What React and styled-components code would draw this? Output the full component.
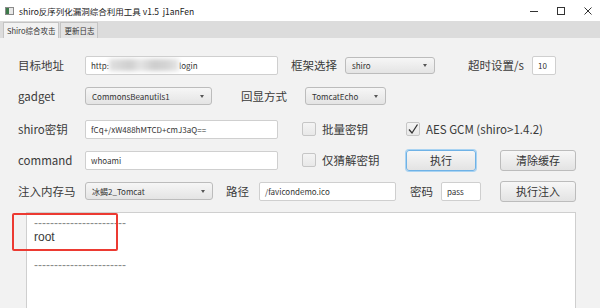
import styled, { createGlobalStyle } from "styled-components";

const Global = createGlobalStyle`
    html, body {
        margin: 0;
        padding: 0;
        background: #f2f2f2;
    }
    body {
        font-family: "Noto Sans CJK SC", "Noto Sans", sans-serif;
        color: #333;
    }
`

export default function App() {
    return (
        <Window>
            <Global />
            <TitleBar>
                <AppIcon />
                <Title>shiro反序列化漏洞综合利用工具 v1.5&nbsp;&nbsp;j1anFen</Title>
                <Controls>
                    <svg width="10" height="10" viewBox="0 0 10 10"><path d="M1 5.5h8" stroke="#333" strokeWidth="1" /></svg>
                    <svg width="10" height="10" viewBox="0 0 10 10"><rect x="1.5" y="1.5" width="7" height="7" fill="none" stroke="#333" strokeWidth="1" /></svg>
                    <svg width="10" height="10" viewBox="0 0 10 10"><path d="M1.5 1.5l7 7M8.5 1.5l-7 7" stroke="#333" strokeWidth="1" /></svg>
                </Controls>
            </TitleBar>
            <TabBar>
                <Tab $active>Shiro综合攻击</Tab>
                <Tab>更新日志</Tab>
            </TabBar>
            <Content>
                <Row>
                    <Label $w={67}>目标地址</Label>
                    <Input $w={193}>http:<Blur />login</Input>
                    <Label $ml={13} $w={54}>框架选择</Label>
                    <Select $w={90} $h={17}>shiro</Select>
                    <Label $ml={33} $w={64}>超时设置/s</Label>
                    <Input $w={24}>10</Input>
                </Row>
                <Row $mt={11}>
                    <Label $w={67}>gadget</Label>
                    <Select $w={127}>CommonsBeanutils1</Select>
                    <Label $ml={29} $w={64}>回显方式</Label>
                    <Select $w={81}>TomcatEcho</Select>
                </Row>
                <Row $mt={13}>
                    <Label $w={67}>shiro密钥</Label>
                    <Input $w={193}>fCq+/xW488hMTCD+cmJ3aQ==</Input>
                    <Check $ml={24} />
                    <CheckText $w={90}>批量密钥</CheckText>
                    <Check $checked>
                        <svg width="12" height="12" viewBox="0 0 12 12"><path d="M2 6.5l3 3.5 5.5-8.5" fill="none" stroke="#333" strokeWidth="1.3" /></svg>
                    </Check>
                    <CheckText>AES GCM (shiro&gt;1.4.2)</CheckText>
                </Row>
                <Row $mt={11}>
                    <Label $w={67}>command</Label>
                    <Input $w={193}>whoami</Input>
                    <Check $ml={24} />
                    <CheckText $w={90}>仅猜解密钥</CheckText>
                    <Button $w={70} $focus>执行</Button>
                    <Button $w={76} $ml={24}>清除缓存</Button>
                </Row>
                <Row $mt={11}>
                    <Label $w={67}>注入内存马</Label>
                    <Select $w={128}>冰蝎2_Tomcat</Select>
                    <Label $ml={13} $w={33}>路径</Label>
                    <Input $w={137}>/favicondemo.ico</Input>
                    <Label $ml={14} $w={31}>密码</Label>
                    <Input $w={40}>pass</Input>
                    <Button $w={76} $ml={19}>执行注入</Button>
                </Row>
                <Output>
                    <Highlight />
                    <Line $dim>-----------------------</Line>
                    <Line>root</Line>
                    <Line>&nbsp;</Line>
                    <Line $dim>-----------------------</Line>
                </Output>
            </Content>
        </Window>
    )
}

const Window = styled.div`
    width: 600px;
    height: 308px;
    overflow: hidden;
    background: #f2f2f2;
`

const TitleBar = styled.div`
    height: 21px;
    background: #fff;
    display: flex;
    align-items: center;
    padding-left: 5px;
`

const AppIcon = styled.div`
    width: 7px;
    height: 6px;
    border: 1px solid #8a8a8a;
    background: linear-gradient(90deg, #3d7a4a 0 3px, #e8e8e8 3px);
    margin-right: 5px;
`

const Title = styled.span`
    font-size: 8.5px;
    color: #222;
    white-space: nowrap;
`

const Controls = styled.div`
    margin-left: auto;
    display: flex;
    gap: 17px;
    padding-right: 7px;
    align-items: center;
`

const TabBar = styled.div`
    height: 17px;
    background: #dcdcdc;
    display: flex;
    align-items: flex-end;
    padding-left: 3px;
    gap: 1px;
`

const Tab = styled.div`
    height: 15px;
    padding: 0 3px;
    font-size: 7.5px;
    line-height: 15px;
    color: #333;
    background: ${p => p.$active ? '#f2f2f2' : '#e4e4e4'};
    border: 1px solid #c4c4c4;
    border-bottom: none;
`

const Content = styled.div`
    padding-top: 17px;
    padding-left: 18px;
`

const Row = styled.div`
    display: flex;
    align-items: center;
    height: 20px;
    margin-top: ${p => p.$mt || 0}px;
`

const Label = styled.div`
    width: ${p => p.$w}px;
    flex-shrink: 0;
    margin-left: ${p => p.$ml || 0}px;
    font-size: 11.5px;
    color: #3a3a3a;
    white-space: nowrap;
`

const Input = styled.div`
    width: ${p => p.$w}px;
    height: 19px;
    flex-shrink: 0;
    box-sizing: border-box;
    background: #fff;
    border: 1px solid #cfcfcf;
    border-radius: 2px;
    font-size: 8px;
    line-height: 17px;
    padding-left: 5px;
    color: #333;
    white-space: nowrap;
    overflow: hidden;
    display: flex;
    align-items: center;
`

const Blur = styled.span`
    display: inline-block;
    width: 70px;
    height: 12px;
    background: linear-gradient(90deg, #e0e0e0, #cfcfcf 30%, #e4e4e4 45%, #cdcdcd 65%, #d6d6d6 85%, #e8e8e8);
    filter: blur(2px);
`

const Select = styled.div`
    width: ${p => p.$w}px;
    height: ${p => p.$h || 18}px;
    flex-shrink: 0;
    box-sizing: border-box;
    background: linear-gradient(#f6f6f6, #e4e4e4);
    border: 1px solid #bcbcbc;
    border-radius: 3px;
    font-size: 8px;
    padding-left: 6px;
    padding-right: 7px;
    display: flex;
    align-items: center;
    justify-content: space-between;
    color: #333;
    white-space: nowrap;

    &::after {
        content: "";
        border-left: 2.5px solid transparent;
        border-right: 2.5px solid transparent;
        border-top: 3px solid #555;
    }
`

const Check = styled.div`
    width: 14px;
    height: 14px;
    flex-shrink: 0;
    box-sizing: border-box;
    margin-left: ${p => p.$ml || 0}px;
    border: 1px solid #c6c6c6;
    border-radius: 2px;
    background: linear-gradient(#f4f4f4, #e8e8e8);
    display: flex;
    align-items: center;
    justify-content: center;
`

const CheckText = styled.div`
    width: ${p => p.$w ? p.$w + 'px' : 'auto'};
    flex-shrink: 0;
    padding-left: 6px;
    box-sizing: border-box;
    font-size: 11.5px;
    color: #3a3a3a;
    white-space: nowrap;
`

const Button = styled.div`
    width: ${p => p.$w}px;
    height: 21px;
    flex-shrink: 0;
    box-sizing: border-box;
    margin-left: ${p => p.$ml || 0}px;
    background: linear-gradient(#f7f7f7, #e3e3e3);
    border: 1px solid ${p => p.$focus ? '#6fb2e6' : '#bcbcbc'};
    box-shadow: ${p => p.$focus ? '0 0 0 1px #a9d3f2' : 'none'};
    border-radius: 3px;
    font-size: 11px;
    color: #333;
    display: flex;
    align-items: center;
    justify-content: center;
`

const Output = styled.div`
    position: relative;
    margin-top: 11px;
    margin-left: 8px;
    width: 550px;
    height: 110px;
    box-sizing: border-box;
    background: #fff;
    border: 1px solid #cfcfcf;
    padding: 3px 7px;
`

const Line = styled.div`
    font-family: "Liberation Sans", Arial, sans-serif;
    font-size: 12px;
    line-height: 14px;
    color: ${p => p.$dim ? '#8a8a8a' : '#3a3a3a'};
    white-space: pre;
`

const Highlight = styled.div`
    position: absolute;
    left: -15px;
    top: 0;
    width: 106px;
    height: 38px;
    box-sizing: border-box;
    border: 2px solid #ec3a32;
    border-radius: 2px;
`
